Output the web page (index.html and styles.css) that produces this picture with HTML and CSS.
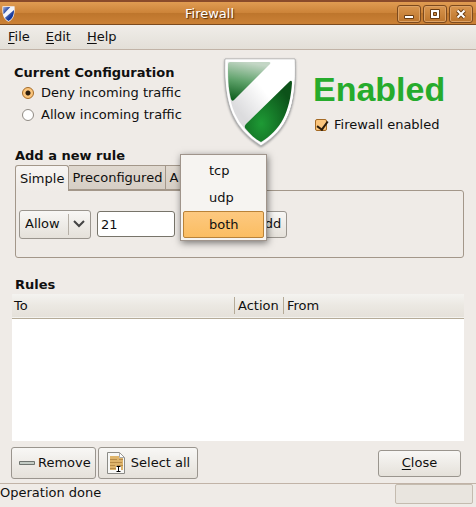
FILE: index.html
```
<!DOCTYPE html>
<html lang="en">
<head>
    <meta charset="UTF-8">
    <meta name="viewport" content="width=device-width, initial-scale=1.0">
    <title>Firewall</title>
    <link rel="stylesheet" href="styles.css">
</head>
<body>
<div class="window">
    <!-- Title bar -->
    <header class="titlebar">
        <svg class="app-icon" viewBox="0 0 72 90" aria-hidden="true">
            <defs>
                <linearGradient id="blue" x1="0" y1="0" x2="1" y2="1">
                    <stop offset="0" stop-color="#a9b6dc"/>
                    <stop offset="0.6" stop-color="#163a9c"/>
                </linearGradient>
            </defs>
            <path d="M2 1H70C73 50 64 73 36 89C8 73 -1 50 2 1Z" fill="#f4f6fc"/>
            <g fill="url(#blue)">
                <path d="M6 5H46L8 46C6 34 5 20 6 5Z"/>
                <path d="M67 22C67 48 60 70 36 84C28 79 20 73 16 66Z"/>
            </g>
        </svg>
        <h1 class="title">Firewall</h1>
        <div class="window-buttons">
            <button type="button" aria-label="Minimize">
                <svg viewBox="0 0 12 12"><path d="M1.500 7.500H10.500V10.500H1.500Z" fill="#fff" stroke="#6b3d12"/></svg>
            </button>
            <button type="button" aria-label="Maximize">
                <svg viewBox="0 0 12 12"><path d="M1.500 1.500H10.500V10.500H1.500ZM4.500 4.500H7.500V7.500H4.500Z" fill="#fff" fill-rule="evenodd" stroke="#6b3d12"/></svg>
            </button>
            <button type="button" aria-label="Close window">
                <svg viewBox="0 0 12 12"><path d="M2.500 2.500L9.500 9.500M9.500 2.500L2.500 9.500" stroke="#6b3d12" stroke-width="4"/><path d="M2.500 2.500L9.500 9.500M9.500 2.500L2.500 9.500" stroke="#fff" stroke-width="2"/></svg>
            </button>
        </div>
    </header>

    <nav class="menubar">
        <button type="button"><u>F</u>ile</button>
        <button type="button"><u>E</u>dit</button>
        <button type="button"><u>H</u>elp</button>
    </nav>

    <main class="content">
        <!-- Current state -->
        <section class="overview">
            <fieldset class="policy">
                <legend>Current Configuration</legend>
                <label><input type="radio" name="policy" checked>Deny incoming traffic</label>
                <label><input type="radio" name="policy">Allow incoming traffic</label>
            </fieldset>
            <svg class="shield" viewBox="0 0 72 90" aria-hidden="true">
                <defs>
                    <linearGradient id="greenTop" x1="0.4" y1="0" x2="0.2" y2="1">
                        <stop offset="0" stop-color="#c3d6c5"/>
                        <stop offset="0.5" stop-color="#5da169"/>
                        <stop offset="1" stop-color="#0b5c1b"/>
                    </linearGradient>
                    <radialGradient id="greenBottom" cx="0.35" cy="0.7" r="0.7">
                        <stop offset="0" stop-color="#1e9a35"/>
                        <stop offset="1" stop-color="#0c5219"/>
                    </radialGradient>
                    <linearGradient id="band" x1="1" y1="0" x2="0" y2="1">
                        <stop offset="0.4" stop-color="#fff"/>
                        <stop offset="0.7" stop-color="#dcdcde"/>
                    </linearGradient>
                </defs>
                <path d="M1 1H71C73 50 63 72 37 88C11 72 -1 50 1 1Z" fill="url(#band)" stroke="#b0b0b0"/>
                <path d="M2.500 2.500H69.500C71 49 62 70 37 86C12 70 1 49 2.500 2.500Z" fill="none" stroke="#fff" stroke-width="2"/>
                <path d="M6 4H45Q47 4 46 6L10 42Q8 44 7 41C4 30 4 18 4 6Q4 4 6 4Z" fill="url(#greenTop)"/>
                <path d="M65 24Q68 21 68 25C66 54 57 72 37 84C31 81 26 76 21 70Q20 68 22 66Z" fill="url(#greenBottom)"/>
            </svg>
            <div class="status">
                <strong class="state">Enabled</strong>
                <label><input type="checkbox" checked>Firewall enabled</label>
            </div>
        </section>

        <!-- New rule -->
        <section class="new-rule">
            <h2>Add a new rule</h2>
            <div class="tabs" role="tablist">
                <button class="tab active" type="button" role="tab" aria-selected="true">Simple</button>
                <button class="tab" type="button" role="tab" aria-selected="false">Preconfigured</button>
                <button class="tab last" type="button" role="tab" aria-selected="false" aria-label="Advanced">A</button>
            </div>
            <form class="panel" role="tabpanel">
                <div class="combo">
                    <select aria-label="Action">
                        <option>Allow</option>
                        <option>Deny</option>
                    </select>
                    <svg viewBox="0 0 12 8" aria-hidden="true"><path d="M1 1L6 6L11 1"/></svg>
                </div>
                <input class="port" type="text" value="21" aria-label="Port">
                <div class="protocol">
                    <button class="button protocol-toggle" type="button" aria-haspopup="listbox" aria-expanded="true" aria-label="Protocol"></button>
                    <ul class="popup" role="listbox" aria-label="Protocol">
                        <li role="option">tcp</li>
                        <li role="option">udp</li>
                        <li class="selected" role="option" aria-selected="true">both</li>
                    </ul>
                </div>
                <button class="button add" type="button">Add</button>
            </form>
        </section>

        <!-- Rule list -->
        <section class="rules">
            <h2>Rules</h2>
            <div class="list">
                <table>
                    <thead>
                        <tr>
                            <th class="to" scope="col">To</th>
                            <th class="action" scope="col">Action</th>
                            <th scope="col">From</th>
                        </tr>
                    </thead>
                    <tbody></tbody>
                </table>
            </div>
        </section>

        <div class="actions">
            <button class="button large" type="button">
                <svg class="icon-remove" viewBox="0 0 16 4" aria-hidden="true"><path d="M.5 .5H15.500V3.500H.5Z" fill="#c3cbc4" stroke="#6f746f"/></svg>
                Remove
            </button>
            <button class="button large select-all" type="button">
                <svg class="icon-select" viewBox="0 0 18 22" aria-hidden="true">
                    <path d="M.5 .5H12.500L17.500 5.500V21.500H.5Z" fill="#f7f7f5" stroke="#8b8b86"/>
                    <path d="M3 4H12V6H16V18H3Z" fill="#deb46b"/>
                    <path d="M3 7.500H10M12 7.500H16M3 10.500H15M3 13.500H8M10 13.500H16M3 16.500H10" stroke="#b78b47"/>
                    <path d="M12.500 1V5.500H17" fill="#fff" stroke="#aaa"/>
                    <path d="M9 14H14V20H9Z" fill="#fff"/>
                    <path d="M9.500 14.500H13.500M9.500 19.500H13.500M11.500 14.500V19.500" stroke="#000"/>
                </svg>
                Select all
            </button>
            <button class="button close" type="button"><span><u>C</u>lose</span></button>
        </div>
    </main>

    <footer class="statusbar">
        <span>Operation done</span>
        <div class="progress"></div>
    </footer>
</div>
</body>
</html>
```

FILE: styles.css
```
* {
    box-sizing: border-box;
}

body {
    margin: 0;
    background-color: #efebe7;
    color: #101010;
    font-family: "DejaVu Sans", sans-serif;
    font-size: 13px;
    line-height: 18px;
}

button,
input,
select {
    color: inherit;
    font: inherit;
}

h1,
h2,
ul,
fieldset {
    margin: 0;
    padding: 0;
}

h2,
legend {
    font-size: 13px;
    font-weight: bold;
    line-height: 18px;
}

.window {
    display: flex;
    flex-direction: column;
    min-height: 100vh;
}

/* Title bar */
.titlebar {
    display: grid;
    grid-template-columns: 1fr auto 1fr;
    align-items: center;
    height: 25px;
    padding: 1px 3px 0 2px;
    background: linear-gradient(#e09c52, #cc8338 50%, #bd752c 50%, #cb8136);
    border-top: 2px solid #8a4b2a;
    border-bottom: 1px solid #7c4a1e;
}

.app-icon {
    width: 13px;
    height: 16px;
}

.title {
    padding-right: 56px;
    color: #fff;
    font-size: 13px;
    font-weight: normal;
    text-shadow: 1px 1px 1px #4e2c0c;
}

.window-buttons {
    display: flex;
    justify-content: flex-end;
    gap: 2px;
}

.window-buttons button {
    display: flex;
    align-items: center;
    justify-content: center;
    width: 24px;
    height: 18px;
    padding: 0;
    background: linear-gradient(#d9964f, #bd752c);
    border: 1px solid #7c4a1e;
    border-radius: 3px;
    box-shadow: inset 0 0 0 1px #dda265;
}

.window-buttons svg {
    width: 12px;
    height: 12px;
}

/* Menu bar */
.menubar {
    display: flex;
    height: 25px;
    padding: 0 2px;
    background: linear-gradient(#f0ede9, #e3dfd8);
    border-bottom: 1px solid #c1b3a7;
}

.menubar button {
    padding: 0 6px;
    background: none;
    border: 0;
}

.menubar button + button {
    margin-left: 4px;
}

u {
    text-underline-offset: 2px;
}

.content {
    display: flex;
    flex: 1;
    flex-direction: column;
    padding: 8px 12px 4px;
}

/* Current configuration */
.overview {
    display: grid;
    grid-template-columns: 212px 72px 1fr;
    height: 89px;
}

.policy {
    padding: 6px 0 0 2px;
    border: 0;
}

.policy legend {
    float: left;
    width: 100%;
    padding: 0;
}

.policy label {
    display: flex;
    align-items: center;
    gap: 7px;
    clear: both;
    height: 22px;
    padding-left: 8px;
}

.policy input,
.status input {
    appearance: none;
    width: 12px;
    height: 12px;
    margin: 0;
    background-color: #fff;
    border: 1px solid #8f8a83;
}

.policy input {
    border-radius: 50%;
}

.policy input:checked {
    background: radial-gradient(circle, #2a1c0c 2px, #fbc57c 3px);
    border-color: #a56a24;
}

.shield {
    width: 72px;
    height: 90px;
    filter: drop-shadow(0 1px 1px #999);
}

.status {
    padding: 13px 0 0 17px;
}

.state {
    display: block;
    color: #26ab2c;
    font-family: "Liberation Sans", Arial, sans-serif;
    font-size: 34px;
    line-height: 36px;
}

.status label {
    display: flex;
    align-items: center;
    gap: 7px;
    padding: 9px 0 0 2px;
}

.status input {
    display: flex;
    border-radius: 2px;
}

.status input:checked {
    background-color: #fbc57c;
    border-color: #a56a24;
}

.status input:checked::before {
    content: "";
    width: 5px;
    height: 9px;
    margin: -1px 0 0 3px;
    border: solid #2a1c0c;
    border-width: 0 2px 2px 0;
    transform: rotate(36deg);
}

/* Rule form */
.new-rule {
    padding-left: 3px;
}

.tabs {
    display: flex;
    align-items: flex-end;
    height: 25px;
}

.tab {
    height: 25px;
    padding: 0 3px;
    background: linear-gradient(#e0d9d0, #d6cec5);
    border: 1px solid #a3978a;
    border-left: 0;
}

.tab.active {
    z-index: 1;
    height: 26px;
    margin-bottom: -1px;
    padding: 0 4px;
    background: linear-gradient(#f7f5f3, #efebe7);
    border-left: 1px solid #a3978a;
    border-bottom: 0;
    border-radius: 3px 3px 0 0;
}

.tab.last {
    width: 72px;
    text-align: left;
}

.panel {
    display: flex;
    align-items: center;
    height: 68px;
    padding: 0 3px;
    border: 1px solid #a3978a;
    border-radius: 0 3px 3px;
}

.combo {
    display: grid;
    align-items: center;
    width: 72px;
    height: 29px;
    background: linear-gradient(#f8f7f5, #e5e1da);
    border: 1px solid #9a958e;
    border-radius: 3px;
}

.combo select,
.combo svg {
    grid-area: 1 / 1;
}

.combo select {
    appearance: none;
    width: 100%;
    height: 27px;
    padding: 0 22px 0 5px;
    background: linear-gradient(#b5afa6, #b5afa6) 48px center / 1px 21px no-repeat;
    border: 0;
}

.combo svg {
    justify-self: end;
    width: 12px;
    height: 8px;
    margin-right: 5px;
    fill: none;
    stroke: #444;
    stroke-width: 2;
    pointer-events: none;
}

.port {
    width: 78px;
    height: 26px;
    margin: 0 5px 0 6px;
    padding: 0 3px;
    background-color: #fff;
    border: 1px solid #77746a;
    border-radius: 3px;
}

.button {
    display: flex;
    align-items: center;
    justify-content: center;
    height: 27px;
    padding: 0 5px;
    background: linear-gradient(#f8f7f5, #e5e1da);
    border: 1px solid #9a958e;
    border-radius: 3px;
}

.protocol {
    position: relative;
    margin-right: 4px;
}

.protocol-toggle {
    width: 66px;
}

/* Opens over the toggle */
.popup {
    position: absolute;
    z-index: 2;
    bottom: -3px;
    left: 0;
    width: 87px;
    padding: 2px;
    background-color: #f6f4f1;
    border: 1px solid #9f948b;
    box-shadow: 1px 2px 7px rgba(0, 0, 0, 0.5);
    list-style: none;
}

.popup li {
    height: 27px;
    padding-left: 25px;
    border: 1px solid transparent;
    border-radius: 2px;
    line-height: 25px;
}

.popup .selected {
    background: linear-gradient(#fdc980, #fbbd62);
    border-color: #b98238;
}

/* Rule list */
.rules {
    display: flex;
    flex: 1;
    flex-direction: column;
    padding-top: 18px;
}

.rules h2 {
    padding-left: 3px;
}

.list {
    flex: 1;
    background-color: #fff;
}

table {
    width: 100%;
    border-collapse: collapse;
    table-layout: fixed;
}

thead {
    background: linear-gradient(#f4f3f0, #ebe8e2 50%, #e5e1da);
    border-bottom: 1px solid #b5ab98;
}

th {
    height: 24px;
    padding: 0 3px 0 4px;
    background: linear-gradient(#b5ab98, #b5ab98) left center / 1px 17px no-repeat;
    font-weight: normal;
    text-align: left;
}

.to {
    width: 222px;
    padding-left: 2px;
    background: none;
}

.action {
    width: 49px;
}

/* Bottom buttons */
.actions {
    display: flex;
    align-items: center;
    gap: 2px;
    margin: 6px 3px 0 -1px;
}

.button.large {
    gap: 3px;
    height: 32px;
    padding: 0 4px 0 7px;
}

.button.select-all {
    gap: 6px;
    padding: 0 7px 0 8px;
}

.icon-remove {
    width: 16px;
    height: 4px;
}

.icon-select {
    width: 18px;
    height: 22px;
}

.close {
    width: 83px;
    margin-left: auto;
}

.statusbar {
    display: flex;
    justify-content: space-between;
    height: 24px;
    padding-right: 3px;
    border-top: 1px solid #c1b3a7;
}

.progress {
    width: 78px;
    height: 20px;
    background-color: #e9e5df;
    border: 1px solid #c4bbaf;
    border-radius: 2px;
}
```
